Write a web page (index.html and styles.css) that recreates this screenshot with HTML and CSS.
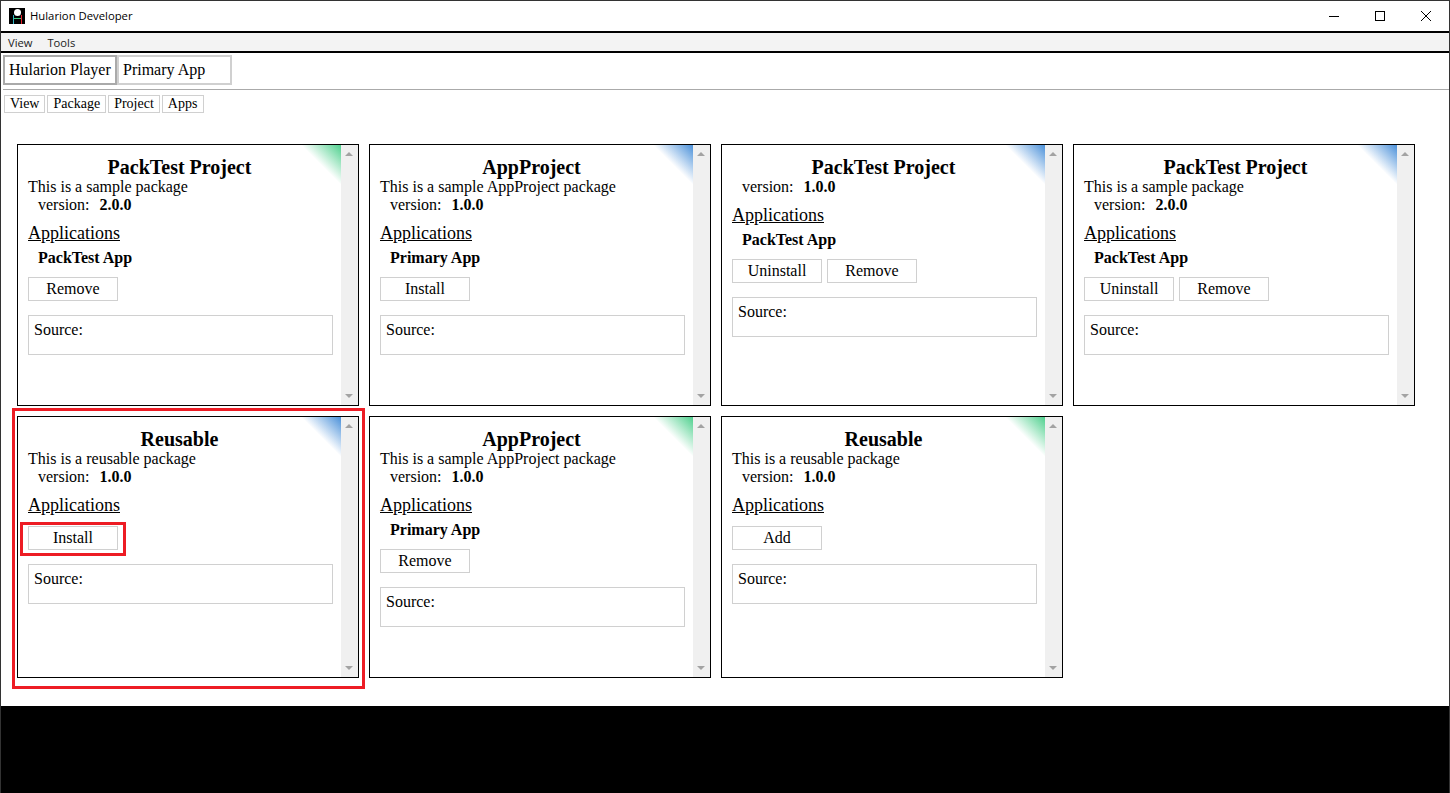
FILE: index.html
```html
<!DOCTYPE html>
<html>
	<head>
		<meta charset="utf-8" />
		<title>Hularion Developer</title>
		<link rel="stylesheet" href="styles.css">
	</head>
	<body>
		<div class="window">
			<div class="titlebar">
				<svg class="app-icon" width="16" height="16" viewBox="0 0 16 16">
					<rect width="16" height="16" fill="#000"/>
					<ellipse cx="8.500" cy="4.500" rx="3.500" ry="3.500" fill="#fff"/>
					<path d="M4.500 7v9" stroke="#2fb7c7" fill="none"/>
					<path d="M12.500 7v9" stroke="#e8202a" fill="none"/>
					<path d="M5 10.500h7" stroke="#3fc77a" fill="none"/>
				</svg>
				<span class="title">Hularion Developer</span>
				<div class="win-buttons">
					<svg width="10" height="10" viewBox="0 0 10 10"><path d="M0 5.500h10" stroke="#000" fill="none"/></svg>
					<svg width="10" height="10" viewBox="0 0 10 10"><rect x=".5" y=".5" width="9" height="9" stroke="#000" fill="none"/></svg>
					<svg width="10" height="10" viewBox="0 0 10 10"><path d="M0 0l10 10M10 0L0 10" stroke="#000" fill="none"/></svg>
				</div>
			</div>
			<div class="menubar">
				<span>View</span>
				<span>Tools</span>
			</div>
			<div class="main">
				<div class="tabs">
					<div class="tab tab-active">Hularion Player</div>
					<div class="tab">Primary App</div>
				</div>
				<div class="subtabs">
					<div class="subtab">View</div>
					<div class="subtab">Package</div>
					<div class="subtab">Project</div>
					<div class="subtab">Apps</div>
				</div>
				<div class="cards">

					<div class="card green">
						<div class="card-body">
							<h3>PackTest Project</h3>
							<div>This is a sample package</div>
							<div class="version"><span>version:</span><b>2.0.0</b></div>
							<div class="apps-head">Applications</div>
							<div class="app-name">PackTest App</div>
							<div class="actions"><div class="btn">Remove</div></div>
							<div class="source">Source:</div>
						</div>
						<div class="scroll"><i class="up"></i><i class="down"></i></div>
					</div>

					<div class="card blue">
						<div class="card-body">
							<h3>AppProject</h3>
							<div>This is a sample AppProject package</div>
							<div class="version"><span>version:</span><b>1.0.0</b></div>
							<div class="apps-head">Applications</div>
							<div class="app-name">Primary App</div>
							<div class="actions"><div class="btn">Install</div></div>
							<div class="source">Source:</div>
						</div>
						<div class="scroll"><i class="up"></i><i class="down"></i></div>
					</div>

					<div class="card blue">
						<div class="card-body">
							<h3>PackTest Project</h3>
							<div class="version"><span>version:</span><b>1.0.0</b></div>
							<div class="apps-head">Applications</div>
							<div class="app-name">PackTest App</div>
							<div class="actions"><div class="btn">Uninstall</div><div class="btn">Remove</div></div>
							<div class="source">Source:</div>
						</div>
						<div class="scroll"><i class="up"></i><i class="down"></i></div>
					</div>

					<div class="card blue">
						<div class="card-body">
							<h3>PackTest Project</h3>
							<div>This is a sample package</div>
							<div class="version"><span>version:</span><b>2.0.0</b></div>
							<div class="apps-head">Applications</div>
							<div class="app-name">PackTest App</div>
							<div class="actions"><div class="btn">Uninstall</div><div class="btn">Remove</div></div>
							<div class="source">Source:</div>
						</div>
						<div class="scroll"><i class="up"></i><i class="down"></i></div>
					</div>

					<div class="card blue">
						<div class="card-body">
							<h3>Reusable</h3>
							<div>This is a reusable package</div>
							<div class="version"><span>version:</span><b>1.0.0</b></div>
							<div class="apps-head">Applications</div>
							<div class="actions no-app"><div class="btn">Install</div></div>
							<div class="source">Source:</div>
						</div>
						<div class="scroll"><i class="up"></i><i class="down"></i></div>
						<div class="mark mark-card"></div>
						<div class="mark mark-btn"></div>
					</div>

					<div class="card green">
						<div class="card-body">
							<h3>AppProject</h3>
							<div>This is a sample AppProject package</div>
							<div class="version"><span>version:</span><b>1.0.0</b></div>
							<div class="apps-head">Applications</div>
							<div class="app-name">Primary App</div>
							<div class="actions"><div class="btn">Remove</div></div>
							<div class="source">Source:</div>
						</div>
						<div class="scroll"><i class="up"></i><i class="down"></i></div>
					</div>

					<div class="card green">
						<div class="card-body">
							<h3>Reusable</h3>
							<div>This is a reusable package</div>
							<div class="version"><span>version:</span><b>1.0.0</b></div>
							<div class="apps-head">Applications</div>
							<div class="actions no-app"><div class="btn">Add</div></div>
							<div class="source">Source:</div>
						</div>
						<div class="scroll"><i class="up"></i><i class="down"></i></div>
					</div>

				</div>
			</div>
			<div class="footer"></div>
		</div>
	</body>
</html>
```

FILE: styles.css
```css
html, body {
	margin:0;
	padding:0;
	height:100%;
	overflow:hidden;
}
body {
	font-family:"Liberation Serif", serif;
	font-size:16px;
	color:#000;
	background:#fff;
}
.window {
	height:793px;
	display:flex;
	flex-direction:column;
	box-sizing:border-box;
	border:solid 1px #333;
	border-bottom:0;
}

/* title bar */
.titlebar {
	height:30px;
	flex:none;
	display:flex;
	align-items:center;
	padding-left:8px;
	font-family:"Open Sans", sans-serif;
	font-size:11.3px;
}
.title {
	margin-top:-2px;
}
.app-icon {
	margin-right:5px;
}
.win-buttons {
	margin-left:auto;
	display:flex;
	gap:36px;
	padding-right:18px;
}
.menubar {
	height:18px;
	flex:none;
	display:flex;
	gap:15px;
	align-items:center;
	padding-left:7px;
	background:#f3f3f3;
	border-top:solid 2px #000;
	border-bottom:solid 2px #000;
	font-family:"Open Sans", sans-serif;
	font-size:11.2px;
	color:#222;
}

/* player tabs */
.main {
	flex:1;
	padding:2px 0 0 2px;
}
.tabs {
	display:flex;
}
.tab {
	width:115px;
	height:30px;
	line-height:26px;
	box-sizing:border-box;
	padding-left:4px;
	border:solid 2px #d0d0d0;
}
.tab-active {
	width:114px;
	border-color:#aaa;
}
.subtabs {
	display:flex;
	gap:2px;
	margin-top:4px;
	padding:5px 0 0 1px;
	border-top:solid 1px #aaa;
	font-size:14px;
}
.subtab {
	height:18px;
	line-height:16px;
	box-sizing:border-box;
	padding:0 5px;
	border:solid 1px #d0d0d0;
}
.subtab:last-child {
	padding-right:6px;
}

/* package cards */
.cards {
	display:grid;
	grid-template-columns:repeat(4, 342px);
	grid-auto-rows:262px;
	gap:10px;
	margin:31px 0 0 14px;
}
.card {
	position:relative;
	display:flex;
	box-sizing:border-box;
	border:solid 1px #000;
}
.card-body {
	position:relative;
	flex:1;
	min-width:0;
	padding-left:10px;
}
.card-body:after {
	content:"";
	position:absolute;
	top:0;
	right:0;
	width:40px;
	height:40px;
	clip-path:polygon(0 0, 100% 0, 100% 100%);
}
.green .card-body:after {
	background:linear-gradient(to top right, #fff 50%, #4fd08e 100%);
}
.blue .card-body:after {
	background:linear-gradient(to top right, #fff 50%, #4a90d9 100%);
}
h3 {
	margin:11px 0 0 -10px;
	font-size:20px;
	line-height:22px;
	text-align:center;
}
.version {
	padding-left:10px;
}
.version b {
	margin-left:10px;
}
.apps-head {
	margin-top:9px;
	font-size:18px;
	line-height:21px;
	text-decoration:underline;
}
.app-name {
	margin-top:5px;
	padding-left:10px;
	font-weight:bold;
	line-height:18px;
}
.actions {
	display:flex;
	gap:5px;
	margin-top:10px;
}
.btn {
	width:90px;
	height:24px;
	line-height:22px;
	box-sizing:border-box;
	text-align:center;
	border:solid 1px #d0d0d0;
}
.source {
	width:305px;
	height:40px;
	box-sizing:border-box;
	margin-top:14px;
	padding:5px;
	border:solid 1px #d0d0d0;
}
.scroll {
	position:relative;
	flex:none;
	width:17px;
	background:#f0f0f0;
}
.scroll i {
	position:absolute;
	left:4px;
	width:0;
	height:0;
	border-left:4px solid transparent;
	border-right:4px solid transparent;
}
.scroll .up {
	top:7px;
	border-bottom:4px solid #a3a3a3;
}
.scroll .down {
	bottom:7px;
	border-top:4px solid #a3a3a3;
}

/* red annotations drawn over the screenshot */
.mark {
	position:absolute;
	box-sizing:border-box;
	border:solid 3px #ed1c24;
}
.mark-card {
	left:-6px;
	top:-9px;
	width:353px;
	height:281px;
}
.mark-btn {
	left:2px;
	top:105px;
	width:106px;
	height:34px;
}

.footer {
	height:87px;
	flex:none;
	background:#000;
}
```
